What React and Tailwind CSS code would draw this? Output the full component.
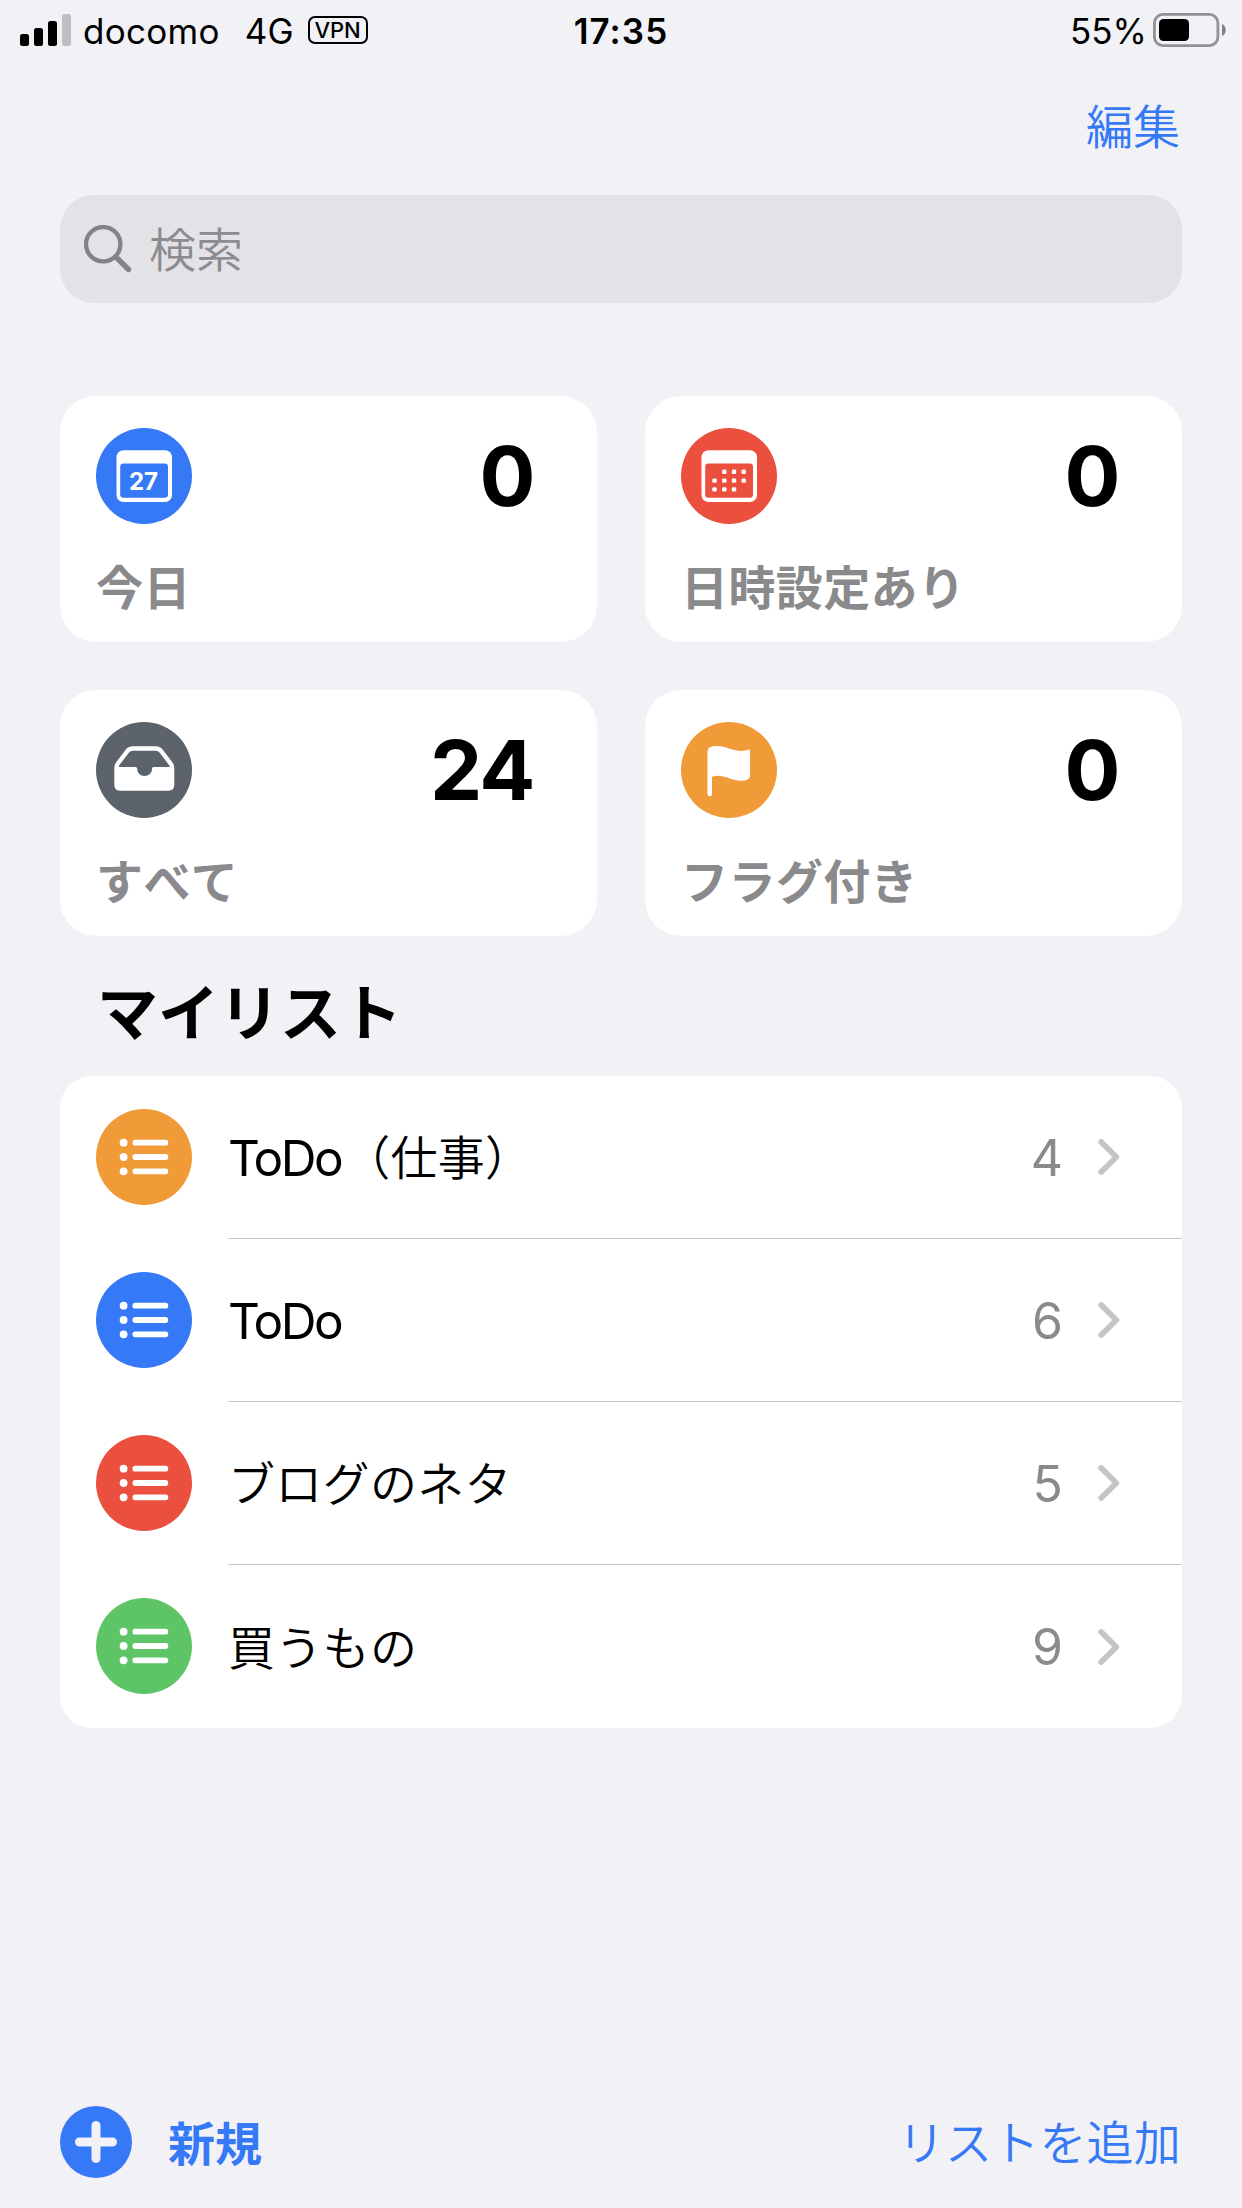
import React from 'react';

const smartLists = [
  { label: '今日', count: 0, color: 'text-[#3579f7]', icon: 'today' },
  { label: '日時設定あり', count: 0, color: 'text-[#eb4f3e]', icon: 'scheduled' },
  { label: 'すべて', count: 24, color: 'text-[#5c636b]', icon: 'all' },
  { label: 'フラグ付き', count: 0, color: 'text-[#f09b38]', icon: 'flagged' },
];

const myLists = [
  { latin: 'ToDo', kana: '（仕事）', count: 4, color: 'text-[#f09b38]' },
  { latin: 'ToDo', kana: '', count: 6, color: 'text-[#3579f7]' },
  { latin: '', kana: 'ブログのネタ', count: 5, color: 'text-[#eb4f3e]' },
  { latin: '', kana: '買うもの', count: 9, color: 'text-[#5ec566]' },
];

const calendarDots = [
  [43.3, 43.8], [53, 43.8], [62.7, 43.8],
  [33.5, 52.6], [43.3, 52.6], [53, 52.6], [62.7, 52.6],
  [33.5, 61.4], [43.3, 61.4], [53, 61.4],
];

const App = () => {
  return (
    <div className="w-[1242px] h-[2208px] bg-[#f1f1f6] text-black flex flex-col overflow-hidden font-['Inter','Noto_Sans_CJK_JP',sans-serif]">
      <StatusBar />

      {/* Nav bar */}
      <div className="h-[131px] flex justify-end pt-[39px] pr-[62px]">
        <button className="text-[47px] leading-[48px] h-12 font-[350] text-[#3579f7]">編集</button>
      </div>

      {/* Search */}
      <div className="mx-[60px] h-[108px] shrink-0 rounded-[34px] bg-[#e3e2e7] flex items-center pl-6">
        <svg className="w-12 h-12" viewBox="0 0 48 48" fill="none" stroke="#838387" strokeLinecap="round">
          <circle cx="19.2" cy="19.2" r="17.2" strokeWidth="4.3" />
          <path d="M32 32L44.5 44.5" strokeWidth="5.4" />
        </svg>
        <span className="ml-[17px] mt-[2px] text-[47px] leading-[48px] font-[350] text-[#8c8b90]">検索</span>
      </div>

      {/* Smart lists */}
      <div className="mx-[60px] mt-[93px] grid grid-cols-2 gap-12">
        {smartLists.map((item) => (
          <SmartCard key={item.label} {...item} />
        ))}
      </div>

      <h2 className="ml-[97px] mt-[43px] h-[97px] text-[61px] leading-[70px] font-semibold [font-kerning:none]">マイリスト</h2>

      {/* My lists */}
      <div className="mx-[60px] bg-white rounded-[32px] overflow-hidden">
        {myLists.map((list, i) => (
          <ListRow key={i} {...list} last={i === myLists.length - 1} />
        ))}
      </div>

      {/* Toolbar */}
      <footer className="mt-auto mb-[30px] mx-[60px] h-[72px] flex items-center justify-between text-[47px] leading-[48px] text-[#3579f7]">
        <button className="flex items-center gap-9 font-semibold">
          <svg className="w-[72px] h-[72px]" viewBox="0 0 72 72">
            <circle cx="36" cy="36" r="36" fill="currentColor" />
            <path d="M36 19.5V52.5M19.5 36H52.5" stroke="#f1f1f6" strokeWidth="9" strokeLinecap="round" />
          </svg>
          <span className="mt-[3px]">新規</span>
        </button>
        <button className="mt-[2px] mr-px font-[350] tracking-[0.2px] [font-kerning:none]">リストを追加</button>
      </footer>
    </div>
  );
};

const StatusBar = () => (
  <header className="h-16 shrink-0 flex justify-between pl-5 pr-[15px] text-[35px] leading-[62px]">
    <div className="w-[500px] flex">
      <svg className="w-[51px] h-8 mt-[14px]" viewBox="0 0 51 32">
        <rect x="0" y="20" width="9" height="12" rx="2.5" />
        <rect x="14" y="14" width="9" height="18" rx="2.5" />
        <rect x="28" y="7" width="9" height="25" rx="2.5" />
        <rect x="42" y="0" width="9" height="32" rx="2.5" fill="#bfbec3" />
      </svg>
      <span className="ml-3 tracking-[0.3px]">docomo</span>
      <span className="ml-[25px]">4G</span>
      <span className="ml-[14px] mt-4 w-[60px] h-7 border-2 border-black rounded-[7px] text-[22px] leading-6 font-medium text-center">VPN</span>
    </div>
    <div className="font-semibold tracking-[1.1px] mr-[5px]">17:35</div>
    <div className="w-[500px] flex justify-end">
      <span className="mr-[6px]">55%</span>
      <svg className="w-[74px] h-[34px] mt-[13px]" viewBox="0 0 74 34">
        <rect x="1.4" y="1.4" width="63.5" height="31.2" rx="8.5" fill="none" stroke="#929296" strokeWidth="2.8" />
        <rect x="6" y="6" width="30" height="22" rx="4.5" />
        <path d="M69 11C74 13 74 21 69 23Z" fill="#838387" />
      </svg>
    </div>
  </header>
);

const SmartCard = ({ label, count, color, icon }) => (
  <div className="h-[246px] bg-white rounded-[36px] pt-8 pl-9 pr-[63px]">
    <div className="flex justify-between">
      <SmartIcon icon={icon} color={color} />
      <span className="text-[83px] leading-[97px] h-24 font-bold tracking-[-1.5px]">{count}</span>
    </div>
    <div className="mt-[40px] text-[47px] leading-[48px] font-semibold tracking-[0.4px] text-[#8a8a8c] [font-kerning:none]">{label}</div>
  </div>
);

const SmartIcon = ({ icon, color }) => (
  <svg className={`w-24 h-24 ${color}`} viewBox="0 0 96 96">
    <circle cx="48" cy="48" r="48" fill="currentColor" />
    {(icon === 'today' || icon === 'scheduled') && (
      <>
        <rect x="20.5" y="22.3" width="55.5" height="51.7" rx="7" fill="#fff" />
        <rect x="24.2" y="35.5" width="47.8" height="34.3" rx="3.2" fill="currentColor" />
      </>
    )}
    {icon === 'today' && (
      <text x="47.5" y="61.7" textAnchor="middle" className="text-[24px] font-bold" fill="#fff">27</text>
    )}
    {icon === 'scheduled' &&
      calendarDots.map(([x, y]) => (
        <rect key={`${x}-${y}`} x={x - 2.2} y={y - 2.2} width="4.4" height="4.4" rx="1.3" fill="#fff" />
      ))}
    {icon === 'all' && (
      <path
        fill="#fff"
        fillRule="evenodd"
        d="M37 24.3H59.5Q64.5 24.3 67 28L76.5 40.5Q78.3 43 78.3 46V63Q78.3 68.7 72.5 68.7H24Q18.3 68.7 18.3 63V46Q18.3 43 20 40.5L29.5 28Q32 24.3 37 24.3ZM37 28.7Q34.3 28.7 32.8 30.8L23 43.6Q22.3 45 23.8 45H39.5Q41.2 45 41.2 46.8C41.2 51 44.3 54 48.5 54C52.7 54 56 51 56 46.8Q56 45 57.7 45H72.6Q74.2 45 73.4 43.6L63.7 30.8Q62.2 28.7 59.5 28.7Z"
      />
    )}
    {icon === 'flagged' && (
      <path
        fill="#fff"
        d="M26.5 29Q26.5 24 36 24C44 24 52 29 61 29C65 29 66.5 27.6 67.5 27.6Q69 27.6 69 29.2V54Q69 58.8 60 58.8C52 58.8 44 53.8 36.5 53.8Q31 53.8 31 55.5V72.3Q31 74.3 28.8 74.3Q26.5 74.3 26.5 72.3Z"
      />
    )}
  </svg>
);

const ListRow = ({ latin, kana, count, color, last }) => (
  <div className="h-[163px] pl-9 flex">
    <svg className={`w-24 h-24 mt-[33px] ${color}`} viewBox="0 0 96 96">
      <circle cx="48" cy="48" r="48" fill="currentColor" />
      {[33.7, 48, 62.3].map((y) => (
        <g key={y} fill="#fff">
          <circle cx="27.6" cy={y} r="3.9" />
          <rect x="36.5" y={y - 2.9} width="35.7" height="5.8" rx="2.6" />
        </g>
      ))}
    </svg>
    <div className={`ml-9 flex-1 flex items-center pr-[62px] ${last ? '' : 'border-b border-[#c6c6c8]'}`}>
      <div className="flex items-center pt-[2px]">
        {latin && <span className="mr-[2px] text-[49.5px] leading-[48px] tracking-[-2.5px]">{latin}</span>}
        {kana && <span className="text-[47px] leading-[48px] font-[350] tracking-[0.3px] [font-kerning:none]">{kana}</span>}
      </div>
      <span className="ml-auto text-[50px] leading-[48px] pt-px text-[#8a8a8c]">{count}</span>
      <svg className="w-[22px] h-9 ml-[35px]" viewBox="0 0 22 36" fill="none" stroke="#c5c5c7" strokeWidth="5.8" strokeLinecap="round" strokeLinejoin="round">
        <path d="M3.2 3L18.3 18L3.2 33" />
      </svg>
    </div>
  </div>
);

export default App;
